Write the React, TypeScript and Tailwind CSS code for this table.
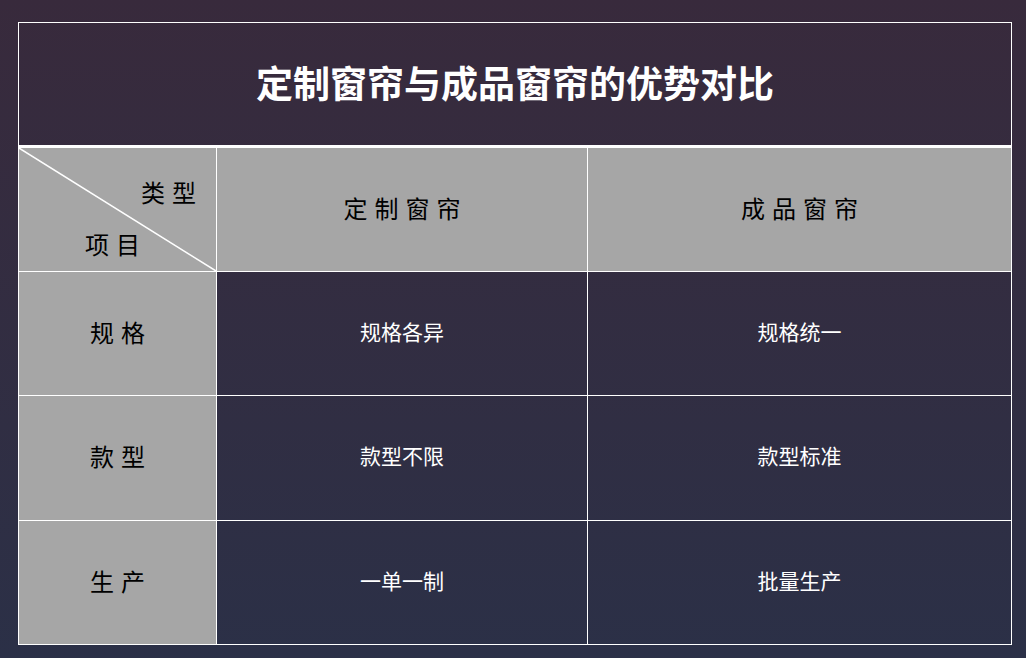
import React from "react";

const font = { fontFamily: '"Noto Sans CJK SC", "Noto Sans", sans-serif' };

const rows = [
  { label: "规格", a: "规格各异", b: "规格统一" },
  { label: "款型", a: "款型不限", b: "款型标准" },
  { label: "生产", a: "一单一制", b: "批量生产" },
];

export default function App() {
  return (
    <div
      className="w-[1026px] h-[658px] bg-gradient-to-b from-[#382a3c] to-[#2b3047] pt-[22px] pl-[18px]"
      style={font}
    >
      <div className="w-[994px] border border-white">
        <div className="h-[125px] flex items-center justify-center border-b-[3px] border-white pb-[4px]">
          <h1 className="text-[37px] font-bold text-white leading-none">
            定制窗帘与成品窗帘的优势对比
          </h1>
        </div>
        <div className="grid grid-cols-[197px_1px_370px_1px_423px]">
          {/* header row */}
          <div className="relative h-[123px] bg-[#a6a6a6]">
            <svg className="absolute inset-0" width="197" height="123" viewBox="0 0 197 123">
              <line x1="0" y1="0" x2="197" y2="123" stroke="white" strokeWidth="1.5" />
            </svg>
            <div className="absolute left-[122px] top-[32px] text-[24px] leading-none text-black tracking-[7px]">类型</div>
            <div className="absolute left-[66px] top-[84px] text-[24px] leading-none text-black tracking-[7px]">项目</div>
          </div>
          <div className="bg-white" />
          <div className="h-[123px] bg-[#a6a6a6] flex items-center justify-center pb-[4px]">
            <span className="text-[24px] leading-none text-black tracking-[7px] pl-[7px]">定制窗帘</span>
          </div>
          <div className="bg-white" />
          <div className="h-[123px] bg-[#a6a6a6] flex items-center justify-center pb-[4px]">
            <span className="text-[24px] leading-none text-black tracking-[7px] pl-[7px]">成品窗帘</span>
          </div>
          {rows.map((r, i) => (
            <React.Fragment key={r.label}>
              <div className="col-span-5 h-px bg-white" />
              <div className={`${i === 1 ? "h-[124px]" : "h-[123px]"} bg-[#a6a6a6] flex items-center justify-center pb-[4px]`}>
                <span className="text-[24px] leading-none text-black tracking-[7px] pl-[7px]">{r.label}</span>
              </div>
              <div className="bg-white" />
              <div className="flex items-center justify-center pb-[5px]">
                <span className="text-[21px] leading-none text-white">{r.a}</span>
              </div>
              <div className="bg-white" />
              <div className="flex items-center justify-center pb-[5px]">
                <span className="text-[21px] leading-none text-white">{r.b}</span>
              </div>
            </React.Fragment>
          ))}
        </div>
      </div>
    </div>
  );
}
